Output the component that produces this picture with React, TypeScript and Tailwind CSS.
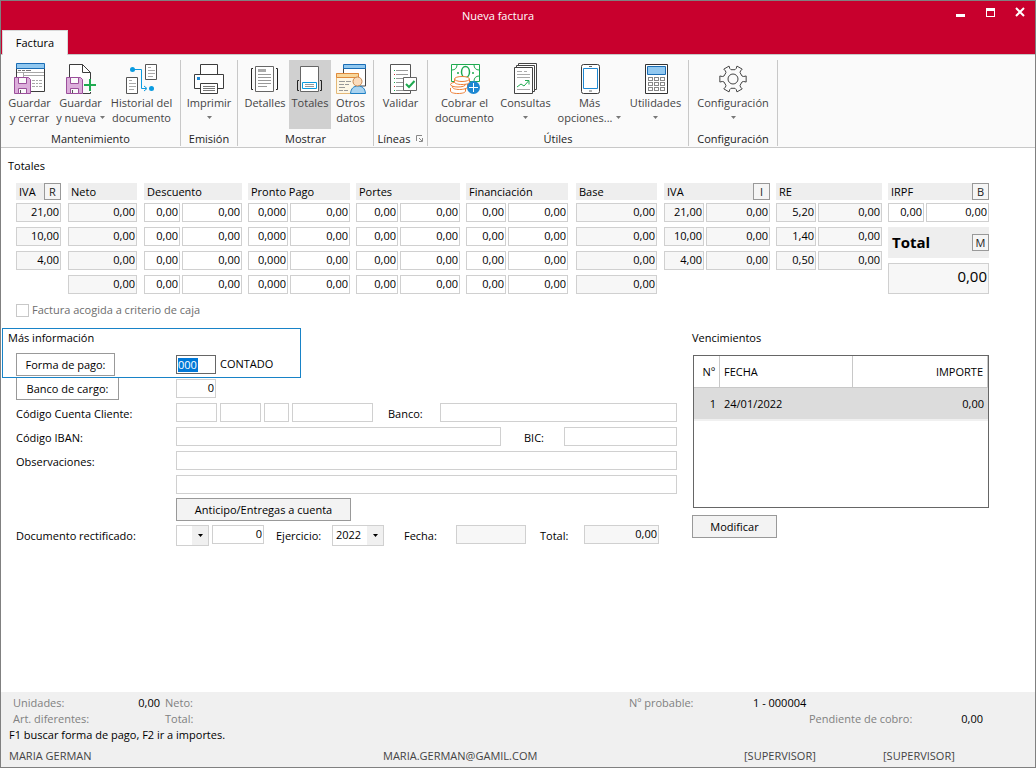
import type { ReactNode } from 'react';

/* ---------- Icons ---------- */

function Icon({ children }: { children: ReactNode }) {
  return (
    <svg width="32" height="32" viewBox="0 0 32 32" fill="none" className="shrink-0" aria-hidden="true">
      {children}
    </svg>
  );
}

function Floppy({ x }: { x: number }) {
  return (
    <g transform={`translate(${x} 14)`}>
      <path d="M.5.5h14l2 2v14H.5z" fill="#dcaedb" stroke="#9b4f9b" />
      <path d="M4.5.5h8v6h-8z" fill="#fafafa" stroke="#9b4f9b" />
      <path d="M4.5 16.500v-5h8v5z" fill="#fafafa" stroke="#9b4f9b" />
      <path d="M6.500 13v3" stroke="#555" />
    </g>
  );
}

function SaveCloseIcon() {
  return (
    <Icon>
      <path d="M2.500 5v23.500h28V5" fill="#fff" stroke="#3c3c3c" />
      <path d="M2.500.5h28v5h-28z" fill="#91c8f0" stroke="#1a6db5" />
      <path d="M4 7.500h3M8 7.500h3M12 7.500h5" stroke="#777" />
      <path d="M3 9.500h27M9.500 10v4M10 12.500h20" stroke="#a8a8a8" />
      <path d="M18 17.500h3M22 17.500h2M25 17.500h3M18 20.500h3M22 20.500h2M25 20.500h3M18 23.500h3M22 23.500h2M25 23.500h3" stroke="#a8a8a8" />
      <Floppy x={0} />
    </Icon>
  );
}

function SaveNewIcon() {
  return (
    <Icon>
      <path d="M4.500 14V1.500h13l8 8V16M25.500 29v1.500H18" fill="#fff" stroke="#3c3c3c" />
      <path d="M17.500 1.500v8h8" stroke="#3c3c3c" />
      <Floppy x={1} />
      <path d="M25 16v12M19 22h12" stroke="#1faa50" strokeWidth="2" />
    </Icon>
  );
}

function HistoryIcon() {
  return (
    <Icon>
      <path d="M19.500 1.500h11v15h-11zM.5 14.500h11v16H.5z" fill="#fff" stroke="#555" />
      <path d="M22 4.500h3M22 7.500h7M22 10.500h7M22 13.500h5M3 17.500h3M3 20.500h7M3 23.500h7M3 26.500h5" stroke="#aaa" />
      <path d="M7 6.500h8.500v19H20M18 23l3 2.500-3 2.500" stroke="#0a9be0" />
      <circle cx="6.500" cy="6.500" r="2.500" fill="#0a9be0" />
      <circle cx="25.500" cy="25.500" r="2.500" fill="#0a9be0" />
    </Icon>
  );
}

function PrinterIcon() {
  return (
    <Icon>
      <path d="M7.500 1.500h17v10h-17zM1.500 11.500h29v14h-29z" fill="#fff" stroke="#3c3c3c" />
      <path d="M7.500 20.500h17v10h-17z" fill="#fff" stroke="#3c3c3c" />
      <path d="M10 23.500h12M10 25.500h12M10 27.500h12" stroke="#777" />
      <path d="M4 14h3v3H4z" fill="#1e88d2" />
    </Icon>
  );
}

function DetailsIcon() {
  return (
    <Icon>
      <path d="M4 5.500H2.500v21H4M27 5.500h1.500v21H27" stroke="#222" />
      <path d="M6.500 3.500h18v25h-18z" fill="#fff" stroke="#666" />
      <path d="M9 6h8v3H9z" fill="#aaa" />
      <path d="M9 11.500h13M9 14.500h13M9 17.500h13M9 20.500h13M9 23.500h9" stroke="#999" />
    </Icon>
  );
}

function TotalsIcon() {
  return (
    <Icon>
      <path d="M5 17.500H3.500v10H5M26 17.500h1.500v10H26" stroke="#222" />
      <path d="M6.500 3.500h18v25h-18z" fill="#fff" stroke="#666" />
      <path d="M8.500 19.500h14v6h-14z" fill="#fff" stroke="#0a9be0" />
      <path d="M11 21.500h9M11 23.500h9" stroke="#999" />
    </Icon>
  );
}

function OtherDataIcon() {
  return (
    <Icon>
      <path d="M8.500 5v18h22V5" fill="#fff" stroke="#444" />
      <path d="M8.500 1.500h22v4h-22z" fill="#91c8f0" stroke="#1a6db5" />
      <path d="M1.500 10.500h22v20h-22z" fill="#fdf7e6" stroke="#e3b878" />
      <path d="M1.500 10.500h22v4h-22z" fill="#f8d79b" stroke="#e08a3c" />
      <path d="M4 18.500h6M11 18.500h5M4 21.500h5M10 21.500h4M4 24.500h6M4 27.500h4M9 27.500h4" stroke="#999" />
      <path d="M15.500 30.500c.5-5 3-7.500 7.500-7.500s7 2.500 7.500 7.500z" fill="#a9d3f0" stroke="#1e7fc4" />
      <circle cx="22.500" cy="18.500" r="4.500" fill="#fbdcbc" stroke="#c98850" />
    </Icon>
  );
}

function ValidateIcon() {
  return (
    <Icon>
      <path d="M5.500 1.500h20v29h-20z" fill="#fff" stroke="#555" />
      <path d="M11 7.500h12M11 11.500h12M11 15.500h8M11 19.500h7M11 23.500h7M11 27.500h9" stroke="#999" />
      <path d="M9 7.500h1M9 15.500h1M9 19.500h1M9 27.500h1" stroke="#1faa50" />
      <path d="M9 11.500h1M9 23.500h1" stroke="#d03030" />
      <path d="M18.500 14.500h13v13h-13z" fill="#fff" stroke="#666" />
      <path d="m21 21 3 3 5.500-6" stroke="#1faa50" strokeWidth="2" />
    </Icon>
  );
}

function ChargeIcon() {
  return (
    <Icon>
      <path d="M2.500 1.500h28v17h-28z" fill="#fff" stroke="#1faa50" />
      <path d="M3 7c3 0 5-2 5-5M30 7c-3 0-5-2-5-5M30 13c-3 0-5 2-5 5" stroke="#1faa50" />
      <ellipse cx="16.500" cy="9" rx="4" ry="5.500" stroke="#1faa50" strokeWidth="1.500" />
      <circle cx="9" cy="10" r="1" fill="#1faa50" />
      <circle cx="24" cy="10" r="1" fill="#1faa50" />
      <g fill="#fff" stroke="#ee7f37">
        <path d="M1.500 25v3c0 1.500 3 2.500 7.500 2.500s7.500-1 7.500-2.500v-3" />
        <path d="M3.500 21v3c0 1.500 3 2.500 7 2.500s8-1 8-2.500v-3" />
        <ellipse cx="9" cy="21.500" rx="7.500" ry="2.500" />
        <path d="M5.500 16v3c0 1.500 3 2.500 7.500 2.500s7.500-1 7.500-2.500v-3" />
        <ellipse cx="13" cy="16" rx="7.500" ry="2.500" />
      </g>
      <circle cx="24.500" cy="24.500" r="6.500" fill="#1e88d2" />
      <path d="M24.500 20v9M20 24.500h9" stroke="#fff" />
    </Icon>
  );
}

function QueriesIcon() {
  return (
    <Icon>
      <path d="M8.500 4V.5h18v26H25" fill="#fff" stroke="#444" />
      <path d="M6.500 5V2.500h18v26H23" fill="#fff" stroke="#444" />
      <path d="M4.500 4.500h18v26h-18z" fill="#fff" stroke="#444" />
      <path d="M7 8.500h5M14 8.500h3M7 11.500h13M7 14.500h13M7 26.500h13" stroke="#aaa" />
      <path d="m7 24 4-3 3 2 4.500-5M15 17.500h4v4" stroke="#1faa50" />
    </Icon>
  );
}

function PhoneIcon() {
  return (
    <Icon>
      <rect x="7.500" y="1.500" width="18" height="29" rx="2" fill="#fff" stroke="#3c3c3c" />
      <path d="M9.500 5.500h14v20h-14z" fill="#fff" stroke="#1e88d2" />
      <path d="M15 3.500h3M15 28h3" stroke="#666" />
    </Icon>
  );
}

function CalculatorIcon() {
  return (
    <Icon>
      <path d="M5.500 1.500h22v29h-22z" fill="#fff" stroke="#333" />
      <path d="M7.500 3.500h18v8h-18z" fill="#91c8f0" stroke="#1a6db5" />
      {[14.5, 19.5, 24.5].map((y) =>
        [8.5, 14.5, 20.5].map((x) => <rect key={`${x}-${y}`} x={x} y={y} width="4" height="3" stroke="#888" />)
      )}
    </Icon>
  );
}

const gearPoints = [0, 60, 120, 180, 240, 300]
  .flatMap((base) =>
    [[9.5, -18], [11, -13], [13.5, -13], [13.5, 13], [11, 13], [9.5, 18]].map(([r, offset]) => {
      const a = ((base + offset) * Math.PI) / 180;
      return `${16 + r * Math.cos(a)},${16 + r * Math.sin(a)}`;
    })
  )
  .join(' ');

function GearIcon() {
  return (
    <Icon>
      <polygon points={gearPoints} stroke="#444" strokeLinejoin="round" />
      <circle cx="16" cy="16" r="5" stroke="#444" />
    </Icon>
  );
}

function Caret({ className = 'text-[#777]' }: { className?: string }) {
  return (
    <svg width="5" height="3" viewBox="0 0 5 3" className={className} aria-hidden="true">
      <path d="M0 0h5L2.500 3z" fill="currentColor" />
    </svg>
  );
}

/* ---------- Ribbon ---------- */

type RibbonButtonProps = {
  icon: ReactNode;
  line1: string;
  line2?: string;
  menu?: boolean;
  active?: boolean;
  width: string;
};

function RibbonButton({ icon, line1, line2, menu, active, width }: RibbonButtonProps) {
  return (
    <button
      type="button"
      className={`flex h-[69px] flex-col items-center whitespace-nowrap pt-[3px] leading-[15px] text-[#444] ${width} ${active ? 'bg-[#d0d0d0]' : ''}`}
    >
      {icon}
      <span>{line1}</span>
      <span className="flex h-[15px] items-center gap-1">
        {line2}
        {menu && <Caret />}
      </span>
    </button>
  );
}

function RibbonGroup({ label, launcher, children }: { label: string; launcher?: boolean; children: ReactNode }) {
  return (
    <div className="flex h-[86px] shrink-0 flex-col border-r border-[#c8c8c8]">
      <div className="flex px-[3px]">{children}</div>
      <div className="flex h-[17px] items-center justify-center gap-[6px] pt-px text-[#222]">
        {label}
        {launcher && (
          <svg width="7" height="7" viewBox="0 0 7 7" fill="none" stroke="#888" aria-hidden="true">
            <path d="M.5 6V.5H6M3 3l3 3M6.500 3v3.500H3" />
          </svg>
        )}
      </div>
    </div>
  );
}

function Ribbon() {
  return (
    <div className="flex h-[94px] border-y border-[#c8c8c8] bg-[#fafafa] pt-[5px]">
      <RibbonGroup label="Mantenimiento">
        <RibbonButton width="w-[51px]" icon={<SaveCloseIcon />} line1="Guardar" line2="y cerrar" />
        <RibbonButton width="w-[51px]" icon={<SaveNewIcon />} line1="Guardar" line2="y nueva" menu />
        <RibbonButton width="w-[71px]" icon={<HistoryIcon />} line1="Historial del" line2="documento" />
      </RibbonGroup>
      <RibbonGroup label="Emisión">
        <RibbonButton width="w-[50px]" icon={<PrinterIcon />} line1="Imprimir" menu />
      </RibbonGroup>
      <RibbonGroup label="Mostrar">
        <RibbonButton width="w-12" icon={<DetailsIcon />} line1="Detalles" />
        <RibbonButton width="w-[42px]" icon={<TotalsIcon />} line1="Totales" active />
        <RibbonButton width="w-[39px]" icon={<OtherDataIcon />} line1="Otros" line2="datos" />
      </RibbonGroup>
      <RibbonGroup label="Líneas" launcher>
        <RibbonButton width="w-[47px]" icon={<ValidateIcon />} line1="Validar" />
      </RibbonGroup>
      <RibbonGroup label="Útiles">
        <RibbonButton width="w-[67px]" icon={<ChargeIcon />} line1="Cobrar el" line2="documento" />
        <RibbonButton width="w-[55px]" icon={<QueriesIcon />} line1="Consultas" menu />
        <RibbonButton width="w-[73px]" icon={<PhoneIcon />} line1="Más" line2="opciones..." menu />
        <RibbonButton width="w-[59px]" icon={<CalculatorIcon />} line1="Utilidades" menu />
      </RibbonGroup>
      <RibbonGroup label="Configuración">
        <RibbonButton width="w-[82px]" icon={<GearIcon />} line1="Configuración" menu />
      </RibbonGroup>
    </div>
  );
}

/* ---------- Form pieces ---------- */

type FieldProps = {
  label?: string;
  id?: string;
  value?: string;
  readOnly?: boolean;
  className?: string;
};

function Field({ label, id, value = '', readOnly, className = 'w-full' }: FieldProps) {
  return (
    <input
      type="text"
      id={id}
      aria-label={label}
      defaultValue={value}
      readOnly={readOnly}
      className={`h-[19px] min-w-0 border border-[#d0d0d0] pr-px pb-[2px] text-right outline-none ${readOnly ? 'bg-[#f7f7f7]' : 'bg-white'} ${className}`}
    />
  );
}

function SmallButton({ children }: { children: ReactNode }) {
  return (
    <button type="button" className="h-[17px] w-[17px] border border-[#999] bg-[#f5f5f5] text-center leading-[14px] text-[#222]">
      {children}
    </button>
  );
}

function Combo({ id, label, options, className }: { id?: string; label?: string; options: string[]; className: string }) {
  return (
    <div className={`relative flex h-[21px] ${className}`}>
      <select id={id} aria-label={label} className="w-full appearance-none border border-[#d0d0d0] bg-white pl-[3px] pb-px leading-[18px] outline-none">
        {options.map((option) => (
          <option key={option}>{option}</option>
        ))}
      </select>
      <span className="pointer-events-none absolute inset-y-px right-px flex w-4 items-center justify-center bg-[#f0f0f0]">
        <Caret className="text-black" />
      </span>
    </div>
  );
}

const four = ['0,00', '0,00', '0,00', '0,00'];
const three = ['0,00', '0,00', '0,00'];

type TaxColumn = {
  title: string;
  key?: string;
  pad?: string;
  split?: string;
  readOnly?: boolean;
  cells: string[][];
};

const columns: TaxColumn[] = [
  { title: 'IVA', key: 'R', pad: 'pr-px', readOnly: true, cells: [['21,00', '10,00', '4,00']] },
  { title: 'Neto', pad: 'pr-px', readOnly: true, cells: [four] },
  { title: 'Descuento', split: 'grid-cols-[36fr_60fr]', cells: [four, four] },
  { title: 'Pronto Pago', split: 'grid-cols-[40fr_60fr]', cells: [['0,000', '0,000', '0,000', '0,000'], four] },
  { title: 'Portes', split: 'grid-cols-[42fr_60fr]', cells: [four, four] },
  { title: 'Financiación', pad: 'pr-[2px]', split: 'grid-cols-[40fr_60fr]', cells: [four, four] },
  { title: 'Base', pad: 'pr-px', readOnly: true, cells: [four] },
  { title: 'IVA', key: 'I', split: 'grid-cols-[40fr_64fr]', readOnly: true, cells: [['21,00', '10,00', '4,00'], three] },
  { title: 'RE', split: 'grid-cols-[40fr_64fr]', readOnly: true, cells: [['5,20', '1,40', '0,50'], three] },
];

function ColumnHeader({ title, button }: { title: string; button?: string }) {
  return (
    <div className="mb-[3px] flex h-[17px] items-center justify-between bg-[#eee] pl-[3px]">
      {title}
      {button && <SmallButton>{button}</SmallButton>}
    </div>
  );
}

function TotalsGrid() {
  return (
    <div className="mt-[10px] grid grid-cols-[46fr_70fr_98fr_102fr_104fr_104fr_82fr_106fr_106fr_101fr] gap-x-[6px] pl-[15px]">
      {columns.map((column, i) => (
        <div key={i} className={column.pad}>
          <ColumnHeader title={column.title} button={column.key} />
          <div className={`grid gap-x-[2px] ${column.split ?? ''}`}>
            {column.cells.map((values, j) => (
              <div key={j} className="flex flex-col gap-[5px]">
                {values.map((value, row) => (
                  <Field key={row} label={`${column.title} ${j + 1}, fila ${row + 1}`} value={value} readOnly={column.readOnly} />
                ))}
              </div>
            ))}
          </div>
        </div>
      ))}
      <div>
        <ColumnHeader title="IRPF" button="B" />
        <div className="grid grid-cols-[36fr_63fr] gap-x-[2px]">
          <Field label="IRPF porcentaje" value="0,00" />
          <Field label="IRPF importe" value="0,00" />
        </div>
        <div className="mt-[5px] flex h-[31px] items-center justify-between bg-[#eee] pl-[4px]">
          <label htmlFor="total" className="text-[15px] font-bold">Total</label>
          <SmallButton>M</SmallButton>
        </div>
        <input
          id="total"
          type="text"
          readOnly
          defaultValue="0,00"
          className="mt-[5px] h-[31px] w-full border border-[#d0d0d0] bg-[#f7f7f7] pr-px pb-[6px] text-right text-[15px] outline-none"
        />
      </div>
    </div>
  );
}

function MoreInfo() {
  return (
    <section className="min-w-0 flex-1">
      {/* Focused block */}
      <div className="ml-px h-[50px] w-[299px] border border-[#1883c7] pl-[5px]">
        <h2 className="h-[18px] leading-[18px]">Más información</h2>
        <div className="mt-[6px] flex items-center pl-[8px]">
          <div className="w-[160px]">
            <button type="button" className="h-[23px] w-[99px] border border-[#999] bg-white">
              Forma de pago:
            </button>
          </div>
          <div className="flex h-[19px] w-10 items-center border border-[#666] bg-white px-px">
            <input
              type="text"
              aria-label="Forma de pago"
              defaultValue="000"
              className="h-[14px] w-[20px] bg-[#0078d7] pb-px text-white outline-none"
            />
          </div>
          <span className="ml-[4px] pb-[2px]">CONTADO</span>
        </div>
      </div>

      <div className="flex flex-col gap-[5px] pl-[15px]">
        <div className="flex h-[20px] items-start">
          <div className="w-[160px] shrink-0">
            <button type="button" className="h-[22px] w-[103px] border border-t-0 border-[#999] bg-white">
              Banco de cargo:
            </button>
          </div>
          <Field label="Banco de cargo" value="0" className="mt-px w-10" />
        </div>
        <div className="flex items-center">
          <label htmlFor="ccc" className="w-[160px] shrink-0 pt-[2px]">Código Cuenta Cliente:</label>
          <div className="flex gap-[3px]">
            <Field id="ccc" className="w-[41px]" />
            <Field label="Oficina" className="w-[41px]" />
            <Field label="Dígito de control" className="w-[25px]" />
            <Field label="Número de cuenta" className="w-[81px]" />
          </div>
          <label htmlFor="banco" className="ml-[15px] w-[52px] shrink-0 pt-[2px]">Banco:</label>
          <Field id="banco" className="flex-1" />
        </div>
        <div className="flex items-center">
          <label htmlFor="iban" className="w-[160px] shrink-0 pt-[2px]">Código IBAN:</label>
          <Field id="iban" className="flex-1" />
          <label htmlFor="bic" className="ml-[23px] w-10 shrink-0 pt-[2px]">BIC:</label>
          <Field id="bic" className="w-[113px]" />
        </div>
        <div className="flex items-center">
          <label htmlFor="observaciones" className="w-[160px] shrink-0 pt-[2px]">Observaciones:</label>
          <Field id="observaciones" className="flex-1" />
        </div>
        <div className="flex pl-[160px]">
          <Field label="Observaciones, segunda línea" className="flex-1" />
        </div>
      </div>

      <div className="mt-1 pl-[175px]">
        <button type="button" className="h-[23px] w-[175px] border border-[#999] bg-[#f3f3f3]">
          Anticipo/Entregas a cuenta
        </button>
      </div>

      <div className="mt-1 flex h-[21px] items-start pl-[15px] leading-[21px]">
        <label htmlFor="rectificado" className="w-[160px] shrink-0">Documento rectificado:</label>
        <Combo id="rectificado" options={['']} className="w-[33px]" />
        <Field label="Número de documento rectificado" value="0" className="ml-[3px] w-[52px]" />
        <label htmlFor="ejercicio" className="ml-3 w-14 shrink-0">Ejercicio:</label>
        <Combo id="ejercicio" options={['2022']} className="w-[52px]" />
        <label htmlFor="fecha" className="ml-5 w-[52px] shrink-0">Fecha:</label>
        <Field id="fecha" readOnly className="w-[70px]" />
        <label htmlFor="total-rectificado" className="ml-[14px] w-11 shrink-0">Total:</label>
        <Field id="total-rectificado" value="0,00" readOnly className="w-[75px]" />
      </div>
    </section>
  );
}

function DueDates() {
  return (
    <section className="w-[297px] shrink-0">
      <h2 className="mt-px h-[18px] leading-[18px]">Vencimientos</h2>
      <div className="mt-2 ml-px h-[153px] border border-[#666] bg-white">
        <table className="w-full table-fixed border-separate border-spacing-0">
          <thead>
            <tr className="h-8">
              <th className="w-[26px] border-r border-b border-[#c8c8c8] pr-1 text-right font-normal">Nº</th>
              <th className="w-[133px] border-r border-b border-[#c8c8c8] pl-1 text-left font-normal">FECHA</th>
              <th className="border-r border-b border-[#c8c8c8] pr-1 text-right font-normal">IMPORTE</th>
            </tr>
          </thead>
          <tbody>
            <tr className="h-[33px] bg-[#dcdcdc]">
              <td className="border-b-2 border-[#f0f0f0] pr-1 text-right">1</td>
              <td className="border-b-2 border-[#f0f0f0] pl-1">24/01/2022</td>
              <td className="border-b-2 border-[#f0f0f0] pr-1 text-right">0,00</td>
            </tr>
          </tbody>
        </table>
      </div>
      <button type="button" className="mt-[7px] h-[23px] w-[85px] border border-[#999] bg-[#f3f3f3]">
        Modificar
      </button>
    </section>
  );
}

function StatusBar() {
  return (
    <footer className="h-[75px] bg-[#f0f0f0] pt-[3px] leading-4 text-black">
      <div className="flex h-4 pl-3 pr-[52px]">
        <span className="w-[90px] text-[#808080]">Unidades:</span>
        <span className="w-[57px] text-right">0,00</span>
        <span className="ml-[5px] text-[#808080]">Neto:</span>
        <span className="ml-auto w-[124px] text-[#808080]">Nº probable:</span>
        <span className="w-[230px]">1 - 000004</span>
      </div>
      <div className="flex h-4 pl-3 pr-[52px]">
        <span className="w-[152px] text-[#808080]">Art. diferentes:</span>
        <span className="text-[#808080]">Total:</span>
        <span className="ml-auto w-[104px] whitespace-nowrap text-[#808080]">Pendiente de cobro:</span>
        <span className="w-[70px] text-right">0,00</span>
      </div>
      <p className="h-4 pl-2">F1 buscar forma de pago, F2 ir a importes.</p>
      <div className="mt-[5px] flex h-4 pl-2 text-[#444]">
        <span className="w-[374px]">MARIA GERMAN</span>
        <span>MARIA.GERMAN@GAMIL.COM</span>
        <span className="ml-auto w-[139px]">[SUPERVISOR]</span>
        <span className="w-[152px]">[SUPERVISOR]</span>
      </div>
    </footer>
  );
}

function TitleBar() {
  return (
    <header className="h-[53px] bg-[#c8002d]">
      <div className="flex h-[29px]">
        <h1 className="flex-1 pl-[39px] text-center leading-[30px] text-white">Nueva factura</h1>
        <div className="flex w-[79px] items-start pt-[3px] text-white">
          <button type="button" aria-label="Minimizar" className="flex h-4 w-[30px] items-center justify-start">
            <svg width="9" height="9" viewBox="0 0 9 9"><path d="M0 6h9v3H0z" fill="currentColor" /></svg>
          </button>
          <button type="button" aria-label="Maximizar" className="flex h-4 w-[29px] items-center justify-start">
            <svg width="9" height="9" viewBox="0 0 9 9"><path d="M0 0h9v9H0zM1 3v5h7V3z" fill="currentColor" fillRule="evenodd" /></svg>
          </button>
          <button type="button" aria-label="Cerrar" className="flex h-4 w-3 items-center justify-start">
            <svg width="10" height="10" viewBox="0 0 10 10"><path d="m1 1 8 8M9 1 1 9" stroke="currentColor" strokeWidth="2" /></svg>
          </button>
        </div>
      </div>
      <button type="button" className="relative ml-px block h-[25px] w-[66px] border border-b-0 border-[#d8d8d8] bg-[#fafafa] pb-px text-black">
        Factura
      </button>
    </header>
  );
}

export default function App() {
  return (
    <div className="flex min-h-screen flex-col border border-[#808080] bg-white font-['Open_Sans','Noto_Sans',sans-serif] text-[11px] leading-[15px] text-black">
      <TitleBar />
      <Ribbon />
      <main className="flex-1 pr-[46px]">
        <h2 className="mt-[10px] pl-[7px]">Totales</h2>
        <TotalsGrid />
        <label className="mt-2 flex h-4 items-center gap-[3px] pl-[15px] text-[#6d6d6d]">
          <input type="checkbox" disabled className="h-[13px] w-[13px] appearance-none border border-[#c8c8c8] bg-white" />
          <span className="pb-px">Factura acogida a criterio de caja</span>
        </label>
        <div className="mt-[10px] flex gap-[15px]">
          <MoreInfo />
          <DueDates />
        </div>
      </main>
      <StatusBar />
    </div>
  );
}
